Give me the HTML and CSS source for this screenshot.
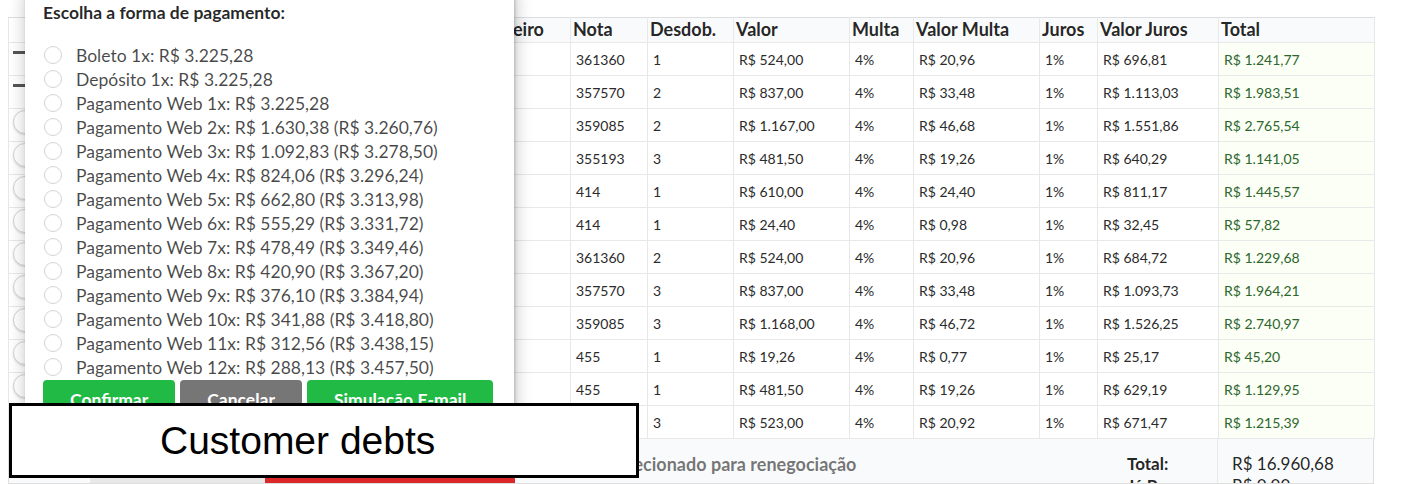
FILE: index.html
```html
<!DOCTYPE html>
<html lang="pt-BR">
<head>
<meta charset="utf-8">
<title>Débitos do cliente</title>
<link rel="stylesheet" href="styles.css">
</head>
<body>
<div class="page">
  <table class="debts">
    <colgroup>
      <col class="w-icon"><col class="w-c1"><col class="w-c2"><col class="w-c3"><col class="w-c4">
      <col class="w-nota"><col class="w-desd"><col class="w-valor"><col class="w-multa"><col class="w-vmulta">
      <col class="w-juros"><col class="w-vjuros"><col class="w-total">
    </colgroup>
    <thead>
      <tr>
        <th class="blank"></th><th></th><th></th><th></th><th class="right">Parceiro</th>
        <th>Nota</th><th>Desdob.</th><th>Valor</th><th>Multa</th><th>Valor Multa</th><th>Juros</th><th>Valor Juros</th><th>Total</th>
      </tr>
    </thead>
    <tbody>
      <tr><td class="ic"><span class="dash"></span></td><td></td><td></td><td></td><td></td><td>361360</td><td>1</td><td>R$ 524,00</td><td>4%</td><td>R$ 20,96</td><td>1%</td><td>R$ 696,81</td><td class="pos">R$ 1.241,77</td></tr>
      <tr><td class="ic"><span class="dash"></span></td><td></td><td></td><td></td><td></td><td>357570</td><td>2</td><td>R$ 837,00</td><td>4%</td><td>R$ 33,48</td><td>1%</td><td>R$ 1.113,03</td><td class="pos">R$ 1.983,51</td></tr>
      <tr><td class="ic"><span class="knob"></span></td><td></td><td></td><td></td><td></td><td>359085</td><td>2</td><td>R$ 1.167,00</td><td>4%</td><td>R$ 46,68</td><td>1%</td><td>R$ 1.551,86</td><td class="pos">R$ 2.765,54</td></tr>
      <tr><td class="ic"><span class="knob"></span></td><td></td><td></td><td></td><td></td><td>355193</td><td>3</td><td>R$ 481,50</td><td>4%</td><td>R$ 19,26</td><td>1%</td><td>R$ 640,29</td><td class="pos">R$ 1.141,05</td></tr>
      <tr><td class="ic"><span class="knob"></span></td><td></td><td></td><td></td><td></td><td>414</td><td>1</td><td>R$ 610,00</td><td>4%</td><td>R$ 24,40</td><td>1%</td><td>R$ 811,17</td><td class="pos">R$ 1.445,57</td></tr>
      <tr><td class="ic"><span class="knob"></span></td><td></td><td></td><td></td><td></td><td>414</td><td>1</td><td>R$ 24,40</td><td>4%</td><td>R$ 0,98</td><td>1%</td><td>R$ 32,45</td><td class="pos">R$ 57,82</td></tr>
      <tr><td class="ic"><span class="knob"></span></td><td></td><td></td><td></td><td></td><td>361360</td><td>2</td><td>R$ 524,00</td><td>4%</td><td>R$ 20,96</td><td>1%</td><td>R$ 684,72</td><td class="pos">R$ 1.229,68</td></tr>
      <tr><td class="ic"><span class="knob"></span></td><td></td><td></td><td></td><td></td><td>357570</td><td>3</td><td>R$ 837,00</td><td>4%</td><td>R$ 33,48</td><td>1%</td><td>R$ 1.093,73</td><td class="pos">R$ 1.964,21</td></tr>
      <tr><td class="ic"><span class="knob"></span></td><td></td><td></td><td></td><td></td><td>359085</td><td>3</td><td>R$ 1.168,00</td><td>4%</td><td>R$ 46,72</td><td>1%</td><td>R$ 1.526,25</td><td class="pos">R$ 2.740,97</td></tr>
      <tr><td class="ic"><span class="knob"></span></td><td></td><td></td><td></td><td></td><td>455</td><td>1</td><td>R$ 19,26</td><td>4%</td><td>R$ 0,77</td><td>1%</td><td>R$ 25,17</td><td class="pos">R$ 45,20</td></tr>
      <tr><td class="ic"><span class="knob"></span></td><td></td><td></td><td></td><td></td><td>455</td><td>1</td><td>R$ 481,50</td><td>4%</td><td>R$ 19,26</td><td>1%</td><td>R$ 629,19</td><td class="pos">R$ 1.129,95</td></tr>
      <tr><td class="ic"><span class="knob"></span></td><td></td><td></td><td></td><td></td><td>355193</td><td>3</td><td>R$ 523,00</td><td>4%</td><td>R$ 20,92</td><td>1%</td><td>R$ 671,47</td><td class="pos">R$ 1.215,39</td></tr>
    </tbody>
  </table>
  <div class="summary">
    <div class="sum-left">
      <div class="fake-input"></div>
      <button class="btn red">&#9776; Opções de pagamento</button>
      <div class="sum-msg">Nada selecionado para renegociação</div>
    </div>
    <div class="sum-labels">
      <div>Total:</div>
      <div>Já Pagos:</div>
    </div>
    <div class="sum-values">
      <div>R$ 16.960,68</div>
      <div>R$ 0,00</div>
    </div>
  </div>
</div>

<div class="modal">
  <div class="modal-title">Escolha a forma de pagamento:</div>
  <ul class="options">
    <li><span class="radio"></span>Boleto 1x: R$ 3.225,28</li>
    <li><span class="radio"></span>Depósito 1x: R$ 3.225,28</li>
    <li><span class="radio"></span>Pagamento Web 1x: R$ 3.225,28</li>
    <li><span class="radio"></span>Pagamento Web 2x: R$ 1.630,38 (R$ 3.260,76)</li>
    <li><span class="radio"></span>Pagamento Web 3x: R$ 1.092,83 (R$ 3.278,50)</li>
    <li><span class="radio"></span>Pagamento Web 4x: R$ 824,06 (R$ 3.296,24)</li>
    <li><span class="radio"></span>Pagamento Web 5x: R$ 662,80 (R$ 3.313,98)</li>
    <li><span class="radio"></span>Pagamento Web 6x: R$ 555,29 (R$ 3.331,72)</li>
    <li><span class="radio"></span>Pagamento Web 7x: R$ 478,49 (R$ 3.349,46)</li>
    <li><span class="radio"></span>Pagamento Web 8x: R$ 420,90 (R$ 3.367,20)</li>
    <li><span class="radio"></span>Pagamento Web 9x: R$ 376,10 (R$ 3.384,94)</li>
    <li><span class="radio"></span>Pagamento Web 10x: R$ 341,88 (R$ 3.418,80)</li>
    <li><span class="radio"></span>Pagamento Web 11x: R$ 312,56 (R$ 3.438,15)</li>
    <li><span class="radio"></span>Pagamento Web 12x: R$ 288,13 (R$ 3.457,50)</li>
  </ul>
  <div class="actions">
    <button class="btn green">Confirmar</button>
    <button class="btn grey">Cancelar</button>
    <button class="btn green">Simulação E-mail</button>
  </div>
</div>

<div class="caption">Customer debts</div>
</body>
</html>
```
FILE: styles.css
```css
html, body {
  margin: 0;
  padding: 0;
  background: #fff;
  width: 1406px;
  height: 484px;
  overflow: hidden;
  font-family: Lato, "Open Sans", "Liberation Sans", sans-serif;
  color: rgba(0, 0, 0, 0.87);
}

.page {
  padding: 17px 0 0 8px;
  width: 1366px;
}

.debts {
  width: 1366px;
  table-layout: fixed;
  border-collapse: collapse;
  border: 1px solid #dededf;
  font-size: 14px;
}

.w-icon { width: 67px; }
.w-c1 { width: 100px; }
.w-c2 { width: 110px; }
.w-c3 { width: 190px; }
.w-c4 { width: 95px; }
.w-nota { width: 77px; }
.w-desd { width: 86px; }
.w-valor { width: 116px; }
.w-multa { width: 64px; }
.w-vmulta { width: 126px; }
.w-juros { width: 58px; }
.w-vjuros { width: 121px; }
.w-total { width: 156px; }

.debts th {
  background: #f9fafb;
  height: 21px;
  padding: 0 2px 3px;
  line-height: 20px;
  text-align: left;
  font-size: 18px;
  font-weight: 700;
  white-space: nowrap;
  overflow: hidden;
  border: 1px solid #e8e8e9;
  border-top: 1px solid #dededf;
}

.debts th.right {
  text-align: right;
  padding-right: 27px;
}

.debts th.blank { background: #fff; }

.debts td {
  height: 32px;
  padding: 0 5px;
  border: 1px solid #e8e8e9;
  white-space: nowrap;
  overflow: hidden;
  color: #2b2b2b;
}

.debts td.pos {
  background: #fcfff5;
  color: #2c662d;
}

.debts td.ic {
  padding: 0 4px;
}

.dash {
  display: block;
  width: 18px;
  height: 3px;
  background: #555;
  margin-top: -8px;
}

.knob {
  display: block;
  width: 22px;
  height: 22px;
  border-radius: 50%;
  background: #fff;
  border: 1px solid #d4d4d5;
  box-shadow: 0 1px 2px rgba(34, 36, 38, 0.15);
  margin-top: -6px;
}

.summary {
  display: flex;
  background: #f9fafb;
  border: 1px solid #dededf;
  border-top: none;
  height: 44px;
  overflow: hidden;
}

.sum-left {
  flex: 1;
  display: flex;
  align-items: flex-start;
  padding-left: 81px;
}

.fake-input {
  width: 175px;
  height: 36px;
  margin-top: 31px;
  background: #e8e8e8;
  flex: none;
}

.btn {
  font-family: Lato, "Open Sans", "Liberation Sans", sans-serif;
  font-weight: 700;
  font-size: 17.5px;
  color: #fff;
  border: none;
  border-radius: 4px;
  height: 40px;
  padding: 0 27px;
  line-height: 40px;
  white-space: nowrap;
  flex: none;
}

.btn.red {
  background: #db2828;
  width: 250px;
  margin-top: 31px;
  border-radius: 0;
}

.btn.green { background: #21ba45; }
.btn.grey { background: #767676; }

.sum-msg {
  margin: 14px 0 0 50px;
  font-size: 18px;
  font-weight: 700;
  line-height: 22px;
  color: rgba(0, 0, 0, 0.55);
  white-space: nowrap;
}

.sum-labels {
  width: 90px;
  padding-top: 14px;
  font-size: 17px;
  font-weight: 700;
  line-height: 22px;
}

.sum-values {
  width: 141px;
  padding: 14px 0 0 14px;
  border-left: 1px solid #e8e8e9;
  font-size: 17px;
  line-height: 22px;
}

.modal {
  position: absolute;
  left: 25px;
  top: -9px;
  width: 471px;
  padding: 12px 0 10px 18px;
  background: #fff;
  box-shadow: 1px 3px 3px 0 rgba(0, 0, 0, 0.2), 1px 3px 15px 2px rgba(0, 0, 0, 0.2);
}

.modal-title {
  font-size: 17.5px;
  font-weight: 700;
  line-height: 20px;
  color: rgba(0, 0, 0, 0.85);
}

.options {
  list-style: none;
  margin: 20px 0 1px;
  padding: 0;
}

.options li {
  display: flex;
  align-items: center;
  height: 24px;
  font-size: 17.5px;
  color: rgba(0, 0, 0, 0.72);
  white-space: nowrap;
}

.radio {
  width: 16px;
  height: 16px;
  border-radius: 50%;
  border: 1px solid #d4d4d5;
  background: #fff;
  margin: 0 14px 0 1px;
  flex: none;
}

.actions {
  display: flex;
  gap: 5px;
}

.caption {
  position: absolute;
  left: 9px;
  top: 403px;
  width: 476px;
  height: 69px;
  padding-left: 148px;
  border: 3px solid #000;
  background: #fff;
  display: flex;
  align-items: center;
  font-family: "Liberation Sans", Arial, sans-serif;
  font-size: 39px;
  color: #000;
}
```
